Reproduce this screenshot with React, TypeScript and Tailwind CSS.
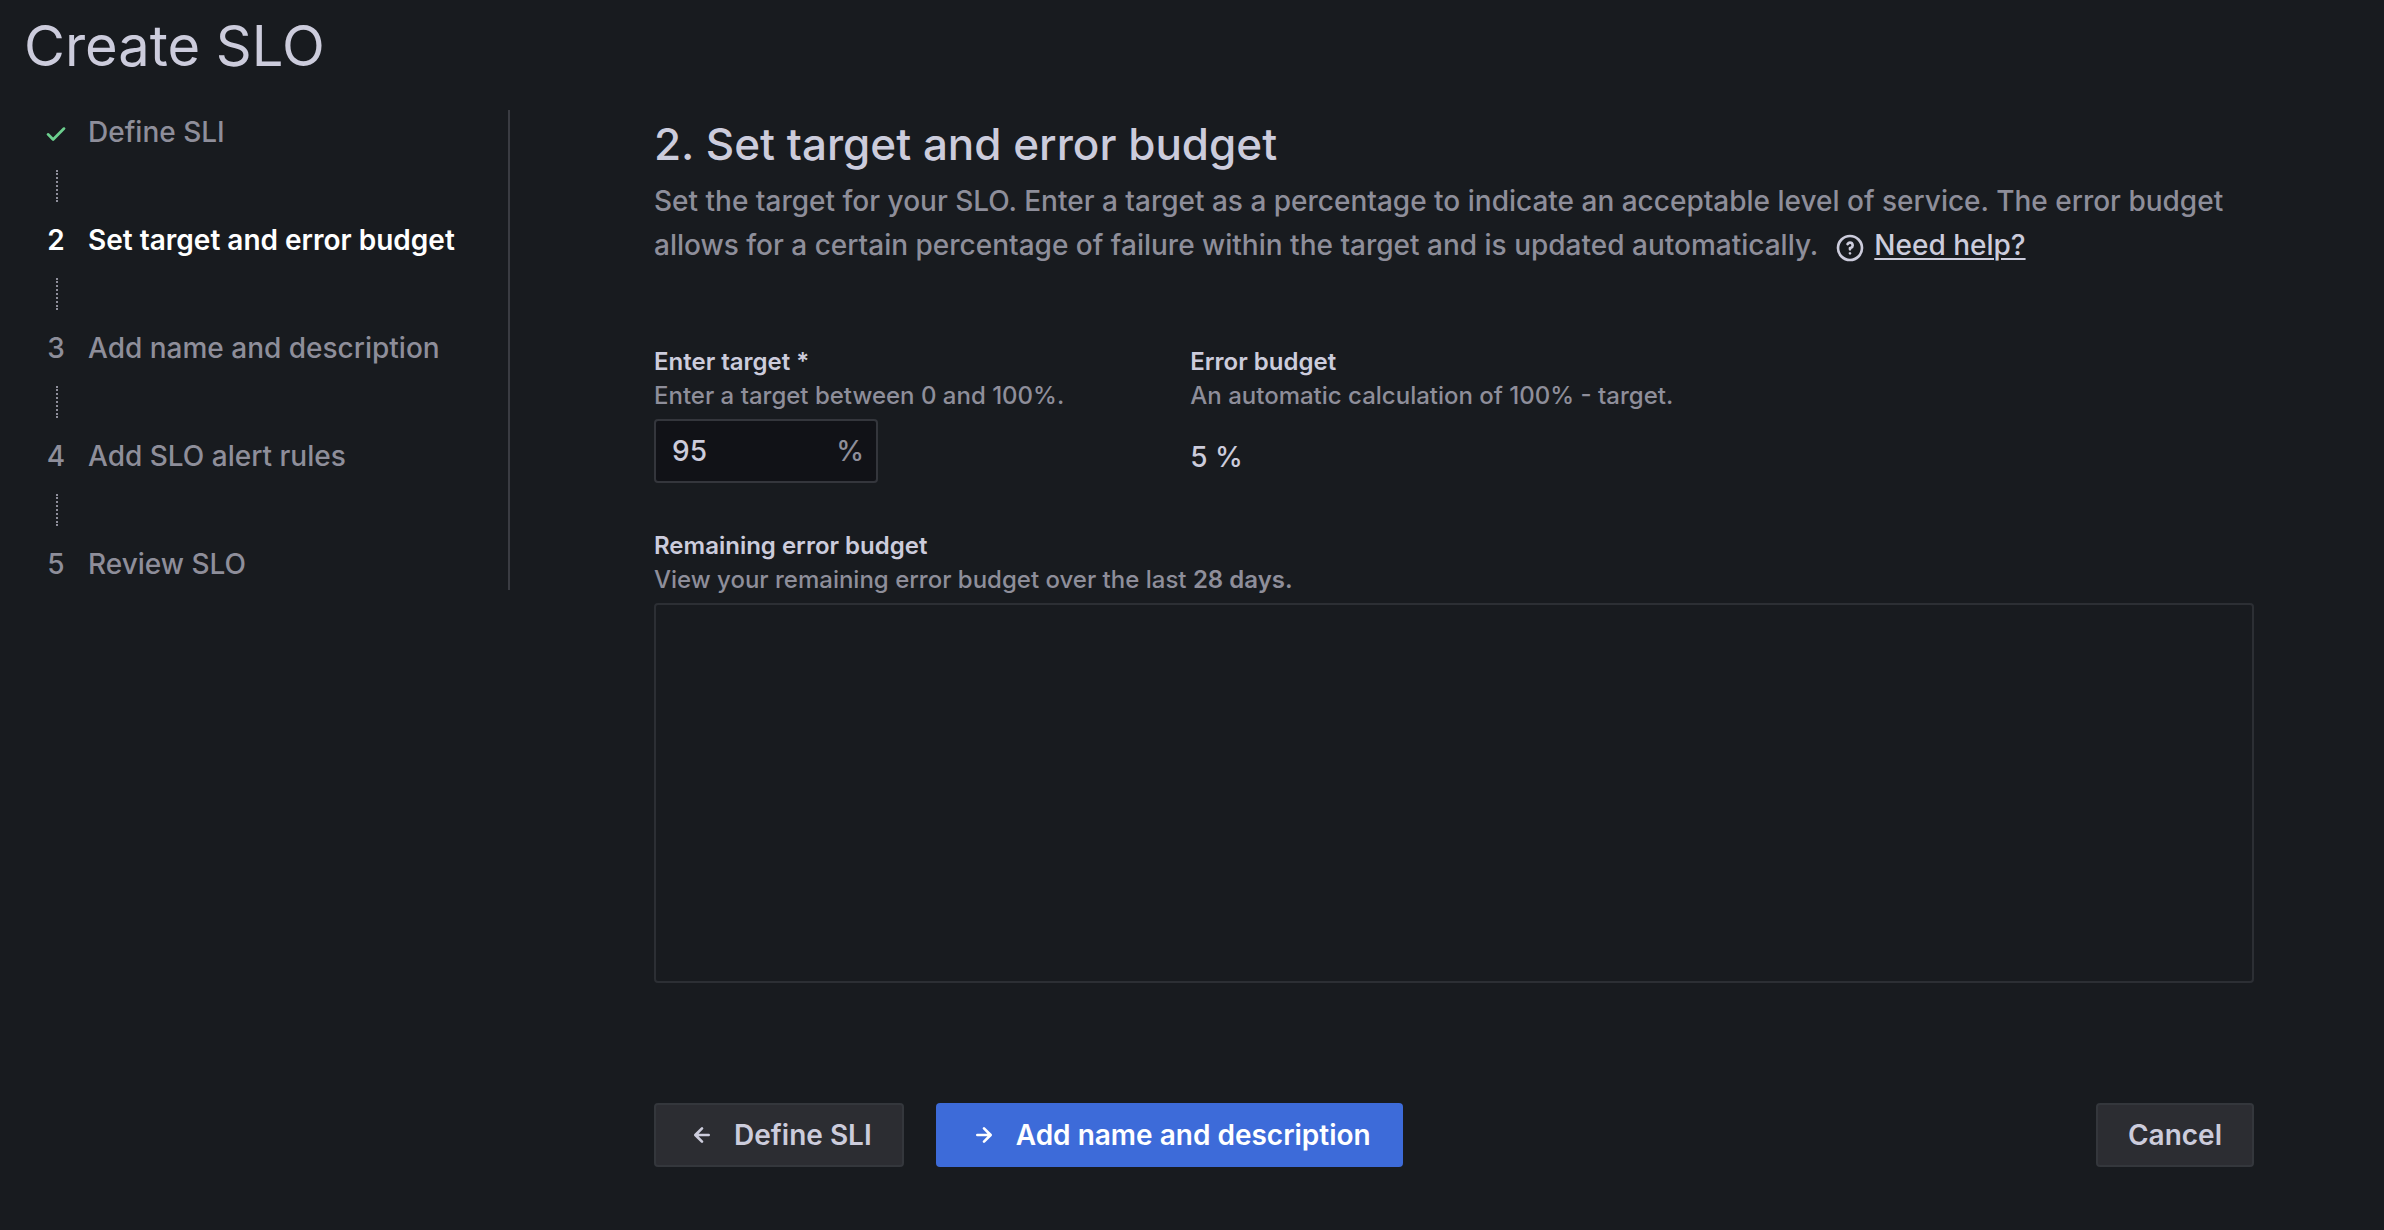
import { Fragment, useState } from 'react';

const steps = [
  'Define SLI',
  'Set target and error budget',
  'Add name and description',
  'Add SLO alert rules',
  'Review SLO',
];
const current = 1;

function CheckIcon() {
  return (
    <svg viewBox="0 0 24 24" className="mt-1 size-8 text-[#6ccf8e]" fill="currentColor" aria-label="Completed">
      <path d="M18.71,7.21a1,1,0,0,0-1.42,0L9.84,14.67,6.71,11.53A1,1,0,1,0,5.29,13l3.84,3.84a1,1,0,0,0,1.42,0l8.16-8.16A1,1,0,0,0,18.71,7.21Z" />
    </svg>
  );
}

function HelpIcon() {
  return (
    <svg viewBox="0 0 24 24" className="mt-0.5 mr-2 inline size-8 align-middle" fill="currentColor" aria-hidden="true">
      <path d="M11.29,15.29a1.58,1.58,0,0,0-.12.15.76.76,0,0,0-.09.18.64.64,0,0,0-.06.18,1.36,1.36,0,0,0,0,.2.84.84,0,0,0,.08.38.9.9,0,0,0,.54.54.94.94,0,0,0,.76,0,.9.9,0,0,0,.54-.54A1,1,0,0,0,13,16a1,1,0,0,0-.29-.71A1,1,0,0,0,11.29,15.29ZM12,2A10,10,0,1,0,22,12,10,10,0,0,0,12,2Zm0,18a8,8,0,1,1,8-8A8,8,0,0,1,12,20ZM12,7A3,3,0,0,0,9.4,8.5a1,1,0,1,0,1.73,1A1,1,0,0,1,12,9a1,1,0,0,1,0,2,1,1,0,0,0-1,1v1a1,1,0,0,0,2,0v-.18A3,3,0,0,0,12,7Z" />
    </svg>
  );
}

function ArrowIcon({ flip = false }: { flip?: boolean }) {
  return (
    <svg viewBox="0 0 24 24" className={flip ? 'size-8 rotate-180' : 'size-8'} fill="currentColor" aria-hidden="true">
      <path d="M17.92,11.62a1,1,0,0,0-.21-.33l-5-5a1,1,0,0,0-1.42,1.42L14.59,11H7a1,1,0,0,0,0,2h7.59l-3.3,3.29a1,1,0,0,0,0,1.42,1,1,0,0,0,1.42,0l5-5a1,1,0,0,0,.21-.33A1,1,0,0,0,17.92,11.62Z" />
    </svg>
  );
}

export default function App() {
  const [target, setTarget] = useState('95');
  const budget = 100 - Number(target || 0);

  return (
    <div className="min-h-screen bg-[#181b1f] font-['Inter',sans-serif] text-[28px] leading-[44px] font-[450] text-[#ccccdc]">
      <header className="px-6 pt-3">
        <h1 className="text-[56px] leading-[68px] font-normal">Create SLO</h1>
      </header>

      <div className="flex items-start pt-[30px] pr-[130px]">
        <nav aria-label="SLO steps" className="h-[480px] w-[510px] shrink-0 border-r-2 border-[#3a3c42] pl-10">
          <ol>
            {steps.map((step, i) => (
              <Fragment key={step}>
                <li
                  aria-current={i === current ? 'step' : undefined}
                  className={i === current ? 'font-semibold text-white' : 'text-[#8e8e9a]'}
                >
                  <a href="#step" className="flex items-center gap-4">
                    <span className="flex w-8 justify-center">{i < current ? <CheckIcon /> : i + 1}</span>
                    {step}
                  </a>
                </li>
                {i < steps.length - 1 && (
                  <li aria-hidden="true" className="flex h-16 pt-4 pb-4 pl-4">
                    <span className="w-0 border-l-2 border-dotted border-[#8e8e9a]" />
                  </li>
                )}
              </Fragment>
            ))}
          </ol>
        </nav>

        <main className="ml-36 min-w-0 flex-1 pt-2">
          <h2 className="text-[44px] leading-[52px]">2. Set target and error budget</h2>
          <p className="pt-[9px] text-[#8e8e9a]">
            Set the target for your SLO. Enter a target as a percentage to indicate an acceptable level of service. The
            error budget allows for a certain percentage of failure within the target and is updated automatically.
            <a href="#help" className="ml-4 whitespace-nowrap text-[#ccccdc]">
              <HelpIcon />
              <span className="underline decoration-2 underline-offset-3">Need help?</span>
            </a>
          </p>

          <form className="pt-[78px]" onSubmit={(e) => e.preventDefault()}>
            <div className="flex gap-[3px]">
              <div className="w-1/3">
                <label htmlFor="target" className="block text-2xl leading-[34px] font-semibold">
                  Enter target *
                </label>
                <p id="target-hint" className="text-2xl leading-[34px] text-[#8e8e9a]">
                  Enter a target between 0 and 100%.
                </p>
                <div className="mt-1.5 flex h-16 w-56 items-center rounded border-2 border-[#34363c] bg-[#111217] pr-3 pl-4">
                  <input
                    id="target"
                    aria-describedby="target-hint"
                    value={target}
                    onChange={(e) => setTarget(e.target.value)}
                    className="min-w-0 flex-1 bg-transparent outline-none"
                  />
                  <span className="text-[#8e8e9a]">%</span>
                </div>
              </div>
              <div>
                <h3 className="text-2xl leading-[34px] font-semibold">Error budget</h3>
                <p className="text-2xl leading-[34px] text-[#8e8e9a]">An automatic calculation of 100% - target.</p>
                <output htmlFor="target" className="mt-[22px] block">
                  {budget} %
                </output>
              </div>
            </div>

            <section className="pt-[46px]">
              <h3 className="text-2xl leading-[34px] font-semibold">Remaining error budget</h3>
              <p className="text-2xl leading-[34px] text-[#8e8e9a]">
                View your remaining error budget over the last <strong className="font-semibold">28 days.</strong>
              </p>
              <div className="mt-1.5 h-[380px] rounded border-2 border-[#2c2f34]" />
            </section>

            <div className="flex gap-8 pt-[120px] pb-16 font-semibold">
              <button type="button" className="flex h-16 items-center gap-4 rounded border-2 border-[#34373c] bg-[#2c2d32] px-[30px]">
                <ArrowIcon flip />
                Define SLI
              </button>
              <button type="submit" className="flex h-16 items-center gap-4 rounded bg-[#3d6bd9] px-8 text-white">
                <ArrowIcon />
                Add name and description
              </button>
              <button type="button" className="ml-auto h-16 rounded border-2 border-[#34373c] bg-[#2c2d32] px-[30px]">
                Cancel
              </button>
            </div>
          </form>
        </main>
      </div>
    </div>
  );
}
